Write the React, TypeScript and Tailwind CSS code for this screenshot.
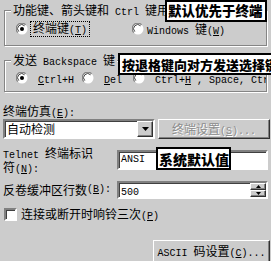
import React from "react";

const L = ({ children }: { children: React.ReactNode }) => (
  <span className="font-['Liberation_Mono',monospace] text-[10px] leading-[10px]">{children}</span>
);

const U = ({ children }: { children: React.ReactNode }) => (
  <span className="underline underline-offset-[1px]">{children}</span>
);

const Radio = ({ checked }: { checked?: boolean }) => (
  <svg width="12" height="12" viewBox="0 0 12 12" className="shrink-0">
    <circle cx="6" cy="6" r="5.5" fill="#fff" />
    <path d="M1.8 9.6 A5.3 5.3 0 0 1 9.6 1.8" stroke="#808080" strokeWidth="1.2" fill="none" />
    <path d="M2.8 8.6 A4 4 0 0 1 8.6 2.8" stroke="#404040" strokeWidth="1" fill="none" />
    {checked && <circle cx="6" cy="6" r="2" fill="#000" />}
  </svg>
);

const sunken =
  "border-2 border-t-[#808080] border-l-[#808080] border-b-white border-r-white shadow-[inset_1px_1px_0_#404040]";
const raised =
  "border border-t-white border-l-white border-b-[#303030] border-r-[#303030] shadow-[inset_-1px_-1px_0_#808080]";

export default function App() {
  return (
    <div className="relative w-[271px] h-[261px] overflow-hidden bg-[#cccccc] text-black text-[12px] leading-[14px] font-['Noto_Sans_CJK_SC',sans-serif] pt-[10px]">
      {/* Group 1 */}
      <div className="relative ml-[4px] w-[263px] h-[36px] border border-[#858585] shadow-[inset_1px_1px_0_#fff,1px_1px_0_#fff]">
        <span className="absolute -top-[8px] left-[6px] px-[2px] bg-[#cccccc] whitespace-nowrap">
          功能键、箭头键和<L> Ctrl </L>键用
        </span>
        <div className="flex items-center h-full pl-[11px] pt-[2px]">
          <div className="flex items-center w-[116px]">
            <Radio checked />
            <span className="ml-[2px] px-[2px] border border-dotted border-black leading-[12px]">
              终端键<L>(<U>T</U>)</L>
            </span>
          </div>
          <div className="flex items-center">
            <Radio />
            <span className="ml-[3px] whitespace-nowrap">
              <L>Windows </L>键<L>(<U>W</U>)</L>
            </span>
          </div>
        </div>
      </div>

      {/* Group 2 */}
      <div className="relative mt-[14px] ml-[4px] w-[263px] h-[32px] border border-[#858585] shadow-[inset_1px_1px_0_#fff,1px_1px_0_#fff]">
        <span className="absolute -top-[8px] left-[6px] px-[2px] bg-[#cccccc] whitespace-nowrap">
          发送<L> Backspace </L>键
        </span>
        <div className="flex items-center h-full pl-[11px] pt-[4px] overflow-hidden">
          <div className="flex items-center w-[66px] shrink-0">
            <Radio checked />
            <span className="ml-[10px]">
              <L><U>C</U>trl+H</L>
            </span>
          </div>
          <div className="flex items-center w-[51px] shrink-0">
            <Radio />
            <span className="ml-[10px]">
              <L><U>D</U>el</L>
            </span>
          </div>
          <div className="flex items-center shrink-0">
            <Radio />
            <span className="ml-[10px] whitespace-nowrap">
              <L>Ctrl+<U>H</U> , Space, Ctrl+?</L>
            </span>
          </div>
        </div>
      </div>

      {/* Terminal emulation */}
      <div className="mt-[12px] pl-[3px] h-[14px] whitespace-nowrap overflow-visible">
        终端仿真<L>(<U>E</U>):</L>
      </div>
      <div className="mt-[1px] h-[20px] flex items-start pl-[3px]">
        <div className={`w-[152px] h-[20px] bg-white flex items-center ${sunken}`}>
          <span className="flex-1 pl-[2px]">自动检测</span>
          <div className={`w-[16px] h-[16px] bg-[#cccccc] flex items-center justify-center ${raised}`}>
            <svg width="7" height="4" viewBox="0 0 7 4">
              <path d="M0 0 H7 L3.5 4 Z" fill="#000" />
            </svg>
          </div>
        </div>
        <div className={`ml-[3px] w-[112px] h-[20px] flex items-center justify-center bg-[#cccccc] ${raised}`}>
          <span className="text-[#8c8c8c] [text-shadow:1px_1px_0_#fff] whitespace-nowrap">
            终端设置<L>(<U>S</U>)...</L>
          </span>
        </div>
      </div>

      {/* Telnet terminal id */}
      <div className="mt-[8px] h-[26px] flex items-start pl-[3px]">
        <div className="w-[114px] flex flex-col">
          <div className="h-[12px] leading-[12px] whitespace-nowrap">
            <L>Telnet </L>终端标识
          </div>
          <div className="h-[13px] leading-[13px] mt-[1px] whitespace-nowrap">
            符<L>(<U>N</U>):</L>
          </div>
        </div>
        <div className={`mt-[3px] w-[151px] h-[20px] bg-white flex items-center pl-[2px] ${sunken}`}>
          <L>ANSI</L>
        </div>
      </div>

      {/* Scrollback */}
      <div className="mt-[8px] h-[18px] flex items-start pl-[3px]">
        <div className="w-[114px] h-[18px] flex items-center whitespace-nowrap">
          反卷缓冲区行数<L>(<U>B</U>):</L>
        </div>
        <div className={`w-[151px] h-[18px] bg-white flex items-center ${sunken}`}>
          <span className="flex-1 pl-[2px]">
            <L>500</L>
          </span>
          <div className="flex flex-col w-[16px] h-[14px]">
            <div className={`h-[7px] bg-[#cccccc] flex items-center justify-center ${raised}`}>
              <svg width="5" height="3" viewBox="0 0 5 3">
                <path d="M0 3 H5 L2.5 0 Z" fill="#000" />
              </svg>
            </div>
            <div className={`h-[7px] bg-[#cccccc] flex items-center justify-center ${raised}`}>
              <svg width="5" height="3" viewBox="0 0 5 3">
                <path d="M0 0 H5 L2.5 3 Z" fill="#000" />
              </svg>
            </div>
          </div>
        </div>
      </div>

      {/* Checkbox */}
      <div className="mt-[8px] h-[14px] flex items-center pl-[4px]">
        <div className={`w-[13px] h-[13px] bg-white ${sunken}`} />
        <span className="ml-[4px] whitespace-nowrap">
          连接或断开时响铃三次<L>(<U>P</U>)</L>
        </span>
      </div>

      {/* ASCII button */}
      <div className="mt-[19px] flex justify-end pr-[1px]">
        <div className={`w-[117px] h-[23px] bg-[#cccccc] flex items-center justify-center ${raised}`}>
          <span className="whitespace-nowrap">
            <L>ASCII </L>码设置<L>(<U>C</U>)...</L>
          </span>
        </div>
      </div>

      {/* Annotations */}
      <div className="absolute left-[165px] top-[0px] w-[102px] h-[22px] bg-white border-2 border-black flex items-center pl-[1px] text-[13.5px] font-black whitespace-nowrap leading-none">
        默认优先于终端
      </div>
      <div className="absolute left-[118px] top-[53px] w-[170px] h-[22px] bg-white border-2 border-black flex items-center pl-[2px] text-[13px] font-black whitespace-nowrap leading-none">
        按退格键向对方发送选择键
      </div>
      <div className="absolute left-[156px] top-[147px] w-[75px] h-[23px] bg-white border-2 border-black flex items-center pl-[1px] text-[14px] font-black whitespace-nowrap leading-none">
        系统默认值
      </div>
    </div>
  );
}
